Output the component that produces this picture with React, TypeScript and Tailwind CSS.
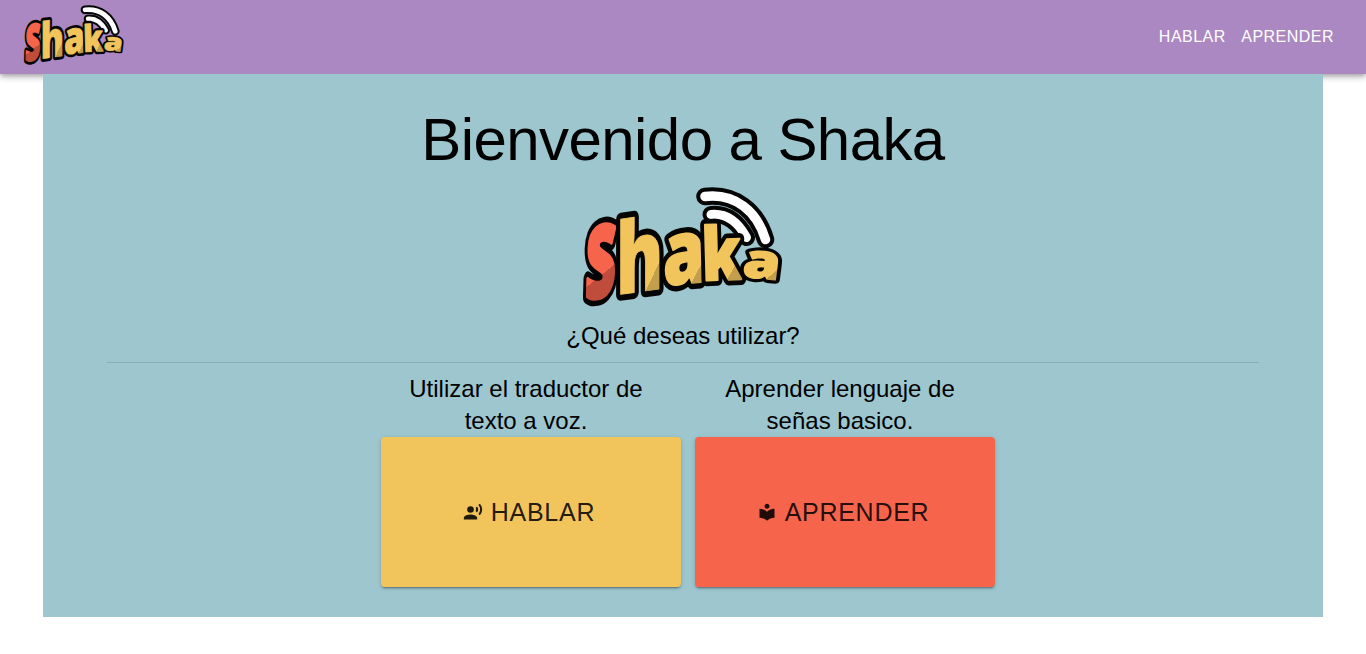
import React from "react";

const fontStack = "font-['Liberation_Sans',Arial,sans-serif]";

type Letter = {
  char: string;
  matrix: string;
  fill: string;
  outline: number;
  bold: number;
};

const letters: Letter[] = [
  { char: "S", matrix: "matrix(0.53 -0.1 -0.03 1 9.500 120)", fill: "red", outline: 15, bold: 4 },
  { char: "h", matrix: "matrix(0.71 -0.1 0 0.99 41 115)", fill: "gold", outline: 13, bold: 1 },
  { char: "a", matrix: "matrix(0.68 -0.06 0 0.89 88 105.500)", fill: "gold", outline: 14, bold: 2 },
  { char: "k", matrix: "matrix(0.59 -0.02 0.02 0.73 127.500 100.500)", fill: "gold", outline: 16, bold: 3 },
  { char: "a", matrix: "matrix(0.6 0.06 -0.06 0.48 166.500 96.500)", fill: "gold", outline: 16, bold: 3 },
];

function ShakaLogo({ id, className }: { id: string; className: string }) {
  return (
    <svg viewBox="8 7 200 120" className={className} role="img" aria-label="Shaka">
      <defs>
        <linearGradient id={`${id}-red`} gradientUnits="userSpaceOnUse" x1="0" y1="-95" x2="50" y2="55">
          <stop offset="0.5" stopColor="#f6644b" />
          <stop offset="0.5" stopColor="#c04d3b" />
        </linearGradient>
        <linearGradient id={`${id}-gold`} gradientUnits="userSpaceOnUse" x1="0" y1="-41.4" x2="94.6" y2="26.2">
          <stop offset="0.5" stopColor="#f2c45c" />
          <stop offset="0.5" stopColor="#c29e4d" />
        </linearGradient>
      </defs>
      <g fill="none" strokeLinecap="round">
        <path d="M130 16.500C160 13 182 31 190.500 59.500" stroke="#050505" strokeWidth="17.500" />
        <path d="M130 16.500C160 13 182 31 190.500 59.500" stroke="#fff" strokeWidth="9.500" />
        <path d="M136 34.500C152 33 163 42 171.500 57.500" stroke="#050505" strokeWidth="17" />
        <path d="M136 34.500C152 33 163 42 171.500 57.500" stroke="#fff" strokeWidth="9" />
      </g>
      {letters.map((l, i) => (
        <g
          key={i}
          transform={l.matrix}
          className="font-['Open_Sans','Noto_Sans',sans-serif] text-[100px] font-extrabold"
          strokeLinejoin="round"
        >
          <text aria-hidden="true" fill="#050505" stroke="#050505" strokeWidth={l.outline}>
            {l.char}
          </text>
          <text fill={`url(#${id}-${l.fill})`} stroke={`url(#${id}-${l.fill})`} strokeWidth={l.bold}>
            {l.char}
          </text>
        </g>
      ))}
    </svg>
  );
}

function VoiceIcon() {
  return (
    <svg viewBox="0 0 24 24" className="size-5" fill="currentColor">
      <circle cx="9" cy="9" r="4" />
      <path d="M9 15c-2.670 0-8 1.340-8 4v2h16v-2c0-2.660-5.330-4-8-4zm7.760-9.640l-1.680 1.690c.84 1.180.84 2.710 0 3.890l1.680 1.690c2.020-2.020 2.020-5.070 0-7.270zM20.070 2l-1.630 1.630c2.770 3.020 2.770 7.560 0 10.740L20.070 16c3.900-3.890 3.910-9.950 0-14z" />
    </svg>
  );
}

function ReaderIcon() {
  return (
    <svg viewBox="0 0 24 24" className="size-5" fill="currentColor">
      <path d="M12 11.550C9.640 9.350 6.480 8 3 8v11c3.480 0 6.640 1.350 9 3.550 2.360-2.190 5.520-3.550 9-3.550V8c-3.480 0-6.640 1.350-9 3.550zM12 8c1.660 0 3-1.340 3-3s-1.340-3-3-3-3 1.340-3 3 1.340 3 3 3z" />
    </svg>
  );
}

function Option({
  lines,
  label,
  icon,
  color,
}: {
  lines: [string, string];
  label: string;
  icon: React.ReactNode;
  color: string;
}) {
  return (
    <div className="w-[300px]">
      <p className="text-2xl leading-8">
        {lines[0]}
        <br />
        {lines[1]}
      </p>
      <button
        className={`ml-[5px] flex h-[150px] w-[300px] items-center justify-center gap-2 rounded-[4px] pr-1 text-[25px] tracking-[0.02857em] text-black/[.87] shadow-[0_3px_1px_-2px_rgba(0,0,0,0.2),0_2px_2px_0_rgba(0,0,0,0.14),0_1px_5px_0_rgba(0,0,0,0.12)] ${color}`}
      >
        {icon}
        <span className="pt-0.5">{label}</span>
      </button>
    </div>
  );
}

export default function App() {
  return (
    <div className={`h-[654px] overflow-hidden bg-white text-black ${fontStack}`}>
      <header className="flex h-[74px] items-start justify-between bg-[#ac88c2] pr-8 pl-6 shadow-[0_2px_4px_-1px_rgba(0,0,0,0.2),0_4px_5px_0_rgba(0,0,0,0.14),0_1px_10px_0_rgba(0,0,0,0.12)]">
        <ShakaLogo id="nav" className="mt-[5px] h-[60px] w-[100px] overflow-visible" />
        <nav className="mt-[25px] flex gap-[15.500px] text-base leading-6 tracking-[0.480px] text-white">
          <a>HABLAR</a>
          <a>APRENDER</a>
        </nav>
      </header>
      <main className="relative mx-auto flex h-[543px] w-[1280px] flex-col items-center bg-[#9dc6ce] px-16 pt-[30px] text-center">
        <h1 className="text-[60px] leading-[72px] tracking-[-0.580px]">Bienvenido a Shaka</h1>
        <ShakaLogo id="hero" className="mt-[11px] h-[120px] w-[200px] overflow-visible" />
        <h2 className="mt-[13px] text-2xl leading-8">¿Qué deseas utilizar?</h2>
        <hr className="mt-[10px] w-full border-t border-black/[.12]" />
        <div className="mt-[10px] flex gap-[14px]">
          <Option
            lines={["Utilizar el traductor de", "texto a voz."]}
            label="HABLAR"
            icon={<VoiceIcon />}
            color="bg-[#f2c45c]"
          />
          <Option
            lines={["Aprender lenguaje de", "señas basico."]}
            label="APRENDER"
            icon={<ReaderIcon />}
            color="bg-[#f6644b]"
          />
        </div>
      </main>
    </div>
  );
}
